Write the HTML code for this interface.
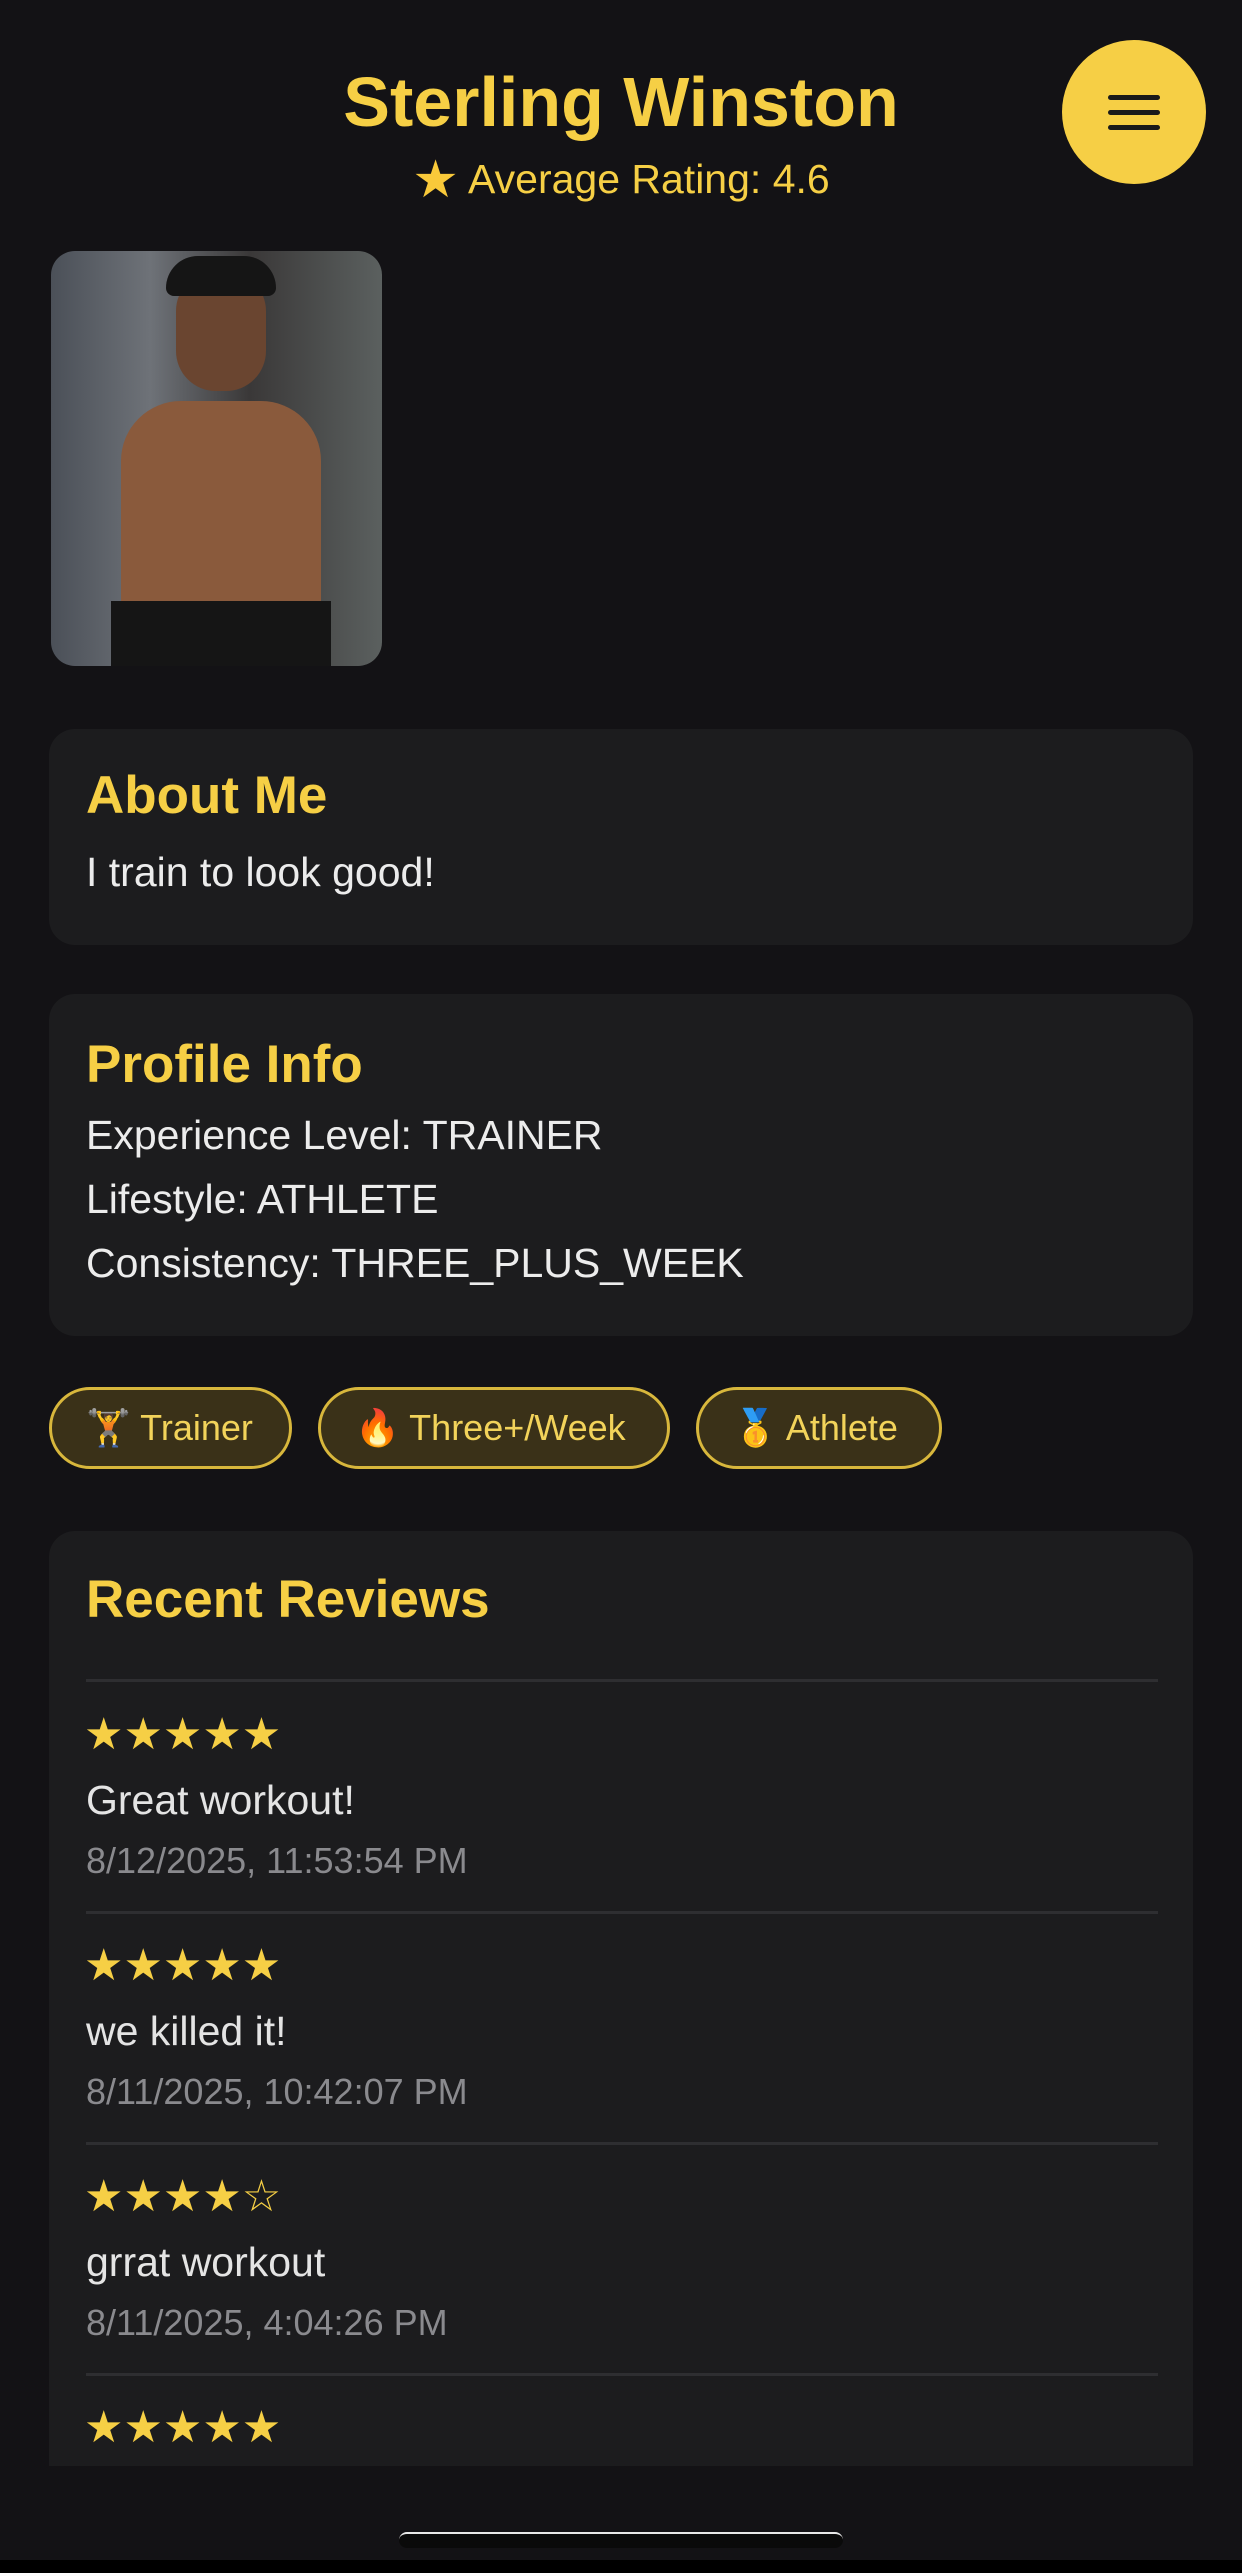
<!DOCTYPE html>
<html><head><meta charset="utf-8"><style>
*{margin:0;padding:0;box-sizing:border-box}
html,body{width:1242px;height:2573px;background:#131215;overflow:hidden;font-family:"Liberation Sans",sans-serif}
.abs{position:absolute}
.y{color:#f6cf45}
.card{position:absolute;left:49px;width:1144px;background:#1c1c1e;border-radius:26px}
.h{position:absolute;left:37px;font-size:53px;font-weight:bold;color:#f6cf45}
.t{position:absolute;left:37px;font-size:41px;color:#ececec}
.chip{position:absolute;top:1387px;height:82px;border:3px solid #d8b73c;border-radius:41px;background:#3a3118;color:#f2d35a;font-size:36px;line-height:76px;padding-left:34px}
.stars{position:absolute;left:35px;font-size:44px;color:#f6cf45;letter-spacing:0px}
.rt{position:absolute;left:37px;font-size:41px;color:#e4e4e4}
.dt{position:absolute;left:37px;font-size:36px;color:#8a8a8e}
.dv{position:absolute;left:37px;width:1072px;height:3px;background:#2e2e31}
</style></head><body>
<div class="abs y" style="left:0;width:1242px;top:62px;text-align:center;font-size:70px;font-weight:bold">Sterling Winston</div>
<div class="abs y" style="left:0;width:1242px;top:150px;text-align:center;font-size:41px"><span style="color:#f9c93a;font-size:52px;vertical-align:-4px">★</span> Average Rating: 4.6</div>
<div class="abs" style="left:1062px;top:40px;width:144px;height:144px;border-radius:50%;background:#f6cf45"></div>
<div class="abs" style="left:1108px;top:95px;width:52px;height:5px;background:#1a1a1a;border-radius:3px"></div>
<div class="abs" style="left:1108px;top:110px;width:52px;height:5px;background:#1a1a1a;border-radius:3px"></div>
<div class="abs" style="left:1108px;top:125px;width:52px;height:5px;background:#1a1a1a;border-radius:3px"></div>
<div class="abs" style="left:51px;top:251px;width:331px;height:415px;border-radius:24px;overflow:hidden;background:linear-gradient(90deg,#4b5058 0%,#6e7278 30%,#3a3838 60%,#5b605f 100%)">
<div class="abs" style="left:70px;top:150px;width:200px;height:230px;background:#8a5a3c;border-radius:60px 60px 20px 20px"></div>
<div class="abs" style="left:125px;top:20px;width:90px;height:120px;background:#6a4530;border-radius:40px"></div>
<div class="abs" style="left:115px;top:5px;width:110px;height:40px;background:#151515;border-radius:40px 40px 10px 10px"></div>
<div class="abs" style="left:60px;top:350px;width:220px;height:70px;background:#151515"></div>
</div>
<div class="card" style="top:729px;height:216px">
<div class="h" style="top:36px">About Me</div>
<div class="t" style="top:120px">I train to look good!</div>
</div>
<div class="card" style="top:994px;height:342px">
<div class="h" style="top:40px">Profile Info</div>
<div class="t" style="top:118px">Experience Level: TRAINER</div>
<div class="t" style="top:182px">Lifestyle: ATHLETE</div>
<div class="t" style="top:246px">Consistency: THREE_PLUS_WEEK</div>
</div>
<div class="chip" style="left:49px;width:243px">🏋 Trainer</div>
<div class="chip" style="left:318px;width:352px">🔥 Three+/Week</div>
<div class="chip" style="left:696px;width:246px">🥇 Athlete</div>
<div class="card" style="top:1531px;height:935px;border-radius:26px 26px 0 0;overflow:hidden">
<div class="h" style="top:38px">Recent Reviews</div>
<div class="dv" style="top:148px"></div>
<div class="stars" style="top:178px">★★★★★</div>
<div class="rt" style="top:246px">Great workout!</div>
<div class="dt" style="top:309px">8/12/2025, 11:53:54 PM</div>
<div class="dv" style="top:380px"></div>
<div class="stars" style="top:409px">★★★★★</div>
<div class="rt" style="top:477px">we killed it!</div>
<div class="dt" style="top:540px">8/11/2025, 10:42:07 PM</div>
<div class="dv" style="top:611px"></div>
<div class="stars" style="top:640px">★★★★☆</div>
<div class="rt" style="top:708px">grrat workout</div>
<div class="dt" style="top:771px">8/11/2025, 4:04:26 PM</div>
<div class="dv" style="top:842px"></div>
<div class="stars" style="top:871px">★★★★★</div>
</div>
<div class="abs" style="left:399px;top:2532px;width:444px;height:16px;background:#0a0a0a;border-top:2px solid #e8e8e8;border-radius:8px"></div>
<div class="abs" style="left:0;top:2560px;width:1242px;height:13px;background:#000"></div>
</body></html>
